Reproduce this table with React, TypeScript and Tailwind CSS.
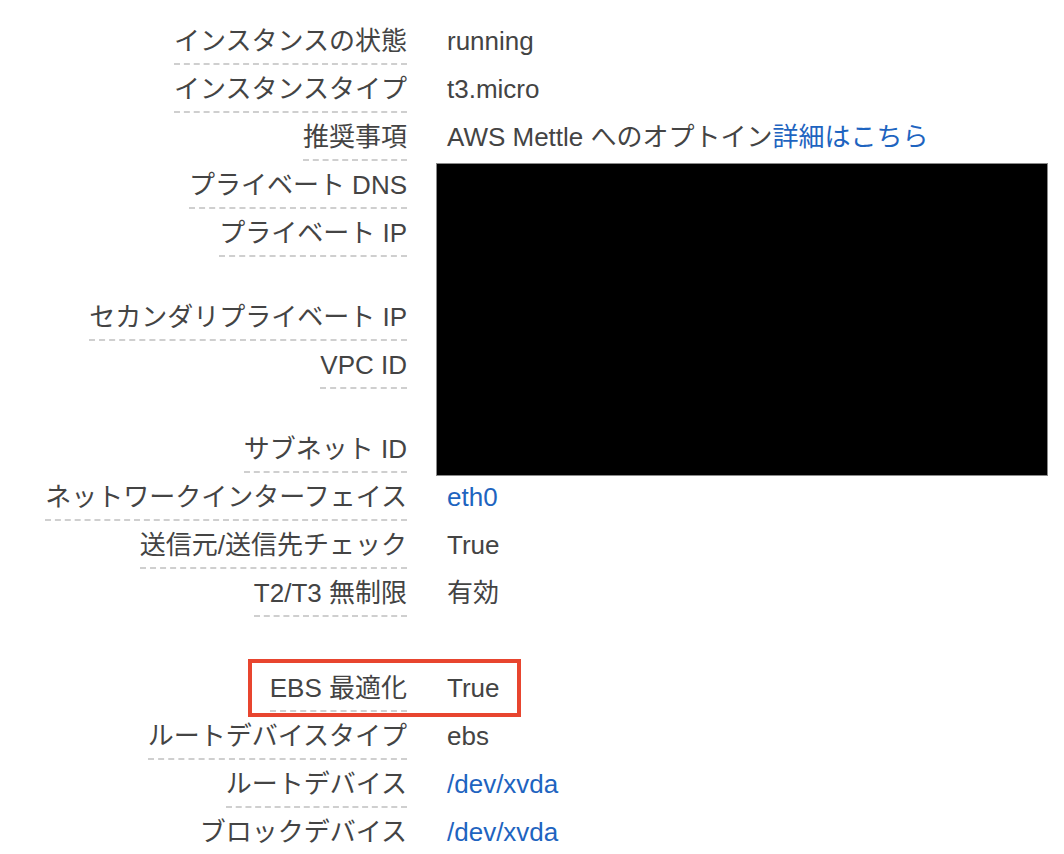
import React from "react";

type Row = {
  label: string;
  value?: React.ReactNode;
  link?: boolean;
  hidden?: boolean;
  highlight?: boolean;
};

const rows: Row[] = [
  { label: "インスタンスの状態", value: "running" },
  { label: "インスタンスタイプ", value: "t3.micro" },
  {
    label: "推奨事項",
    value: (
      <>
        AWS Mettle へのオプトイン<span className="text-[#1e64c0]">詳細はこちら</span>
      </>
    ),
  },
  { label: "プライベート DNS", hidden: true },
  { label: "プライベート IP", hidden: true },
  { label: "セカンダリプライベート IP", hidden: true },
  { label: "VPC ID", hidden: true },
  { label: "サブネット ID", hidden: true },
  { label: "ネットワークインターフェイス", value: "eth0", link: true },
  { label: "送信元/送信先チェック", value: "True" },
  { label: "T2/T3 無制限", value: "有効" },
  { label: "EBS 最適化", value: "True", highlight: true },
  { label: "ルートデバイスタイプ", value: "ebs" },
  { label: "ルートデバイス", value: "/dev/xvda", link: true },
  { label: "ブロックデバイス", value: "/dev/xvda", link: true },
];

export default function App() {
  return (
    <div
      className="min-h-screen bg-white pt-[17px] text-[26px] text-[#444]"
      style={{ fontFamily: '"Liberation Sans", "Noto Sans CJK JP", sans-serif' }}
    >
      <div className="grid grid-cols-[407px_1fr] grid-rows-[48px_48px_48px_48px_84px_48px_84px_48px_48px_48px_95px_48px_48px_48px_48px]">
        {/* redacted block over the network values (placed first, rows 4-8) */}
        <div className="col-start-2 row-start-4 row-span-5 self-start ml-[29px] mt-[2px] h-[313px] w-[612px] bg-black border border-[#8a8a8a]" />

        {rows.map((r, i) => (
          <React.Fragment key={i}>
            <div className="relative flex justify-end items-start">
              <span className="inline-block pt-[8px] pb-[6px] leading-[32px] whitespace-nowrap border-b-2 border-dashed border-[#cfcfcf]">
                {r.label}
              </span>
              {r.highlight && (
                <div className="absolute left-[248px] -top-[5px] h-[58px] w-[273px] border-4 border-[#e8452f] pointer-events-none" />
              )}
            </div>
            {!r.hidden && (
              <div className="pl-[40px] pt-[8px] leading-[32px] whitespace-nowrap">
                {r.value && (
                  <span className={r.link ? "text-[#1e64c0]" : ""}>{r.value}</span>
                )}
              </div>
            )}
          </React.Fragment>
        ))}
      </div>
    </div>
  );
}
